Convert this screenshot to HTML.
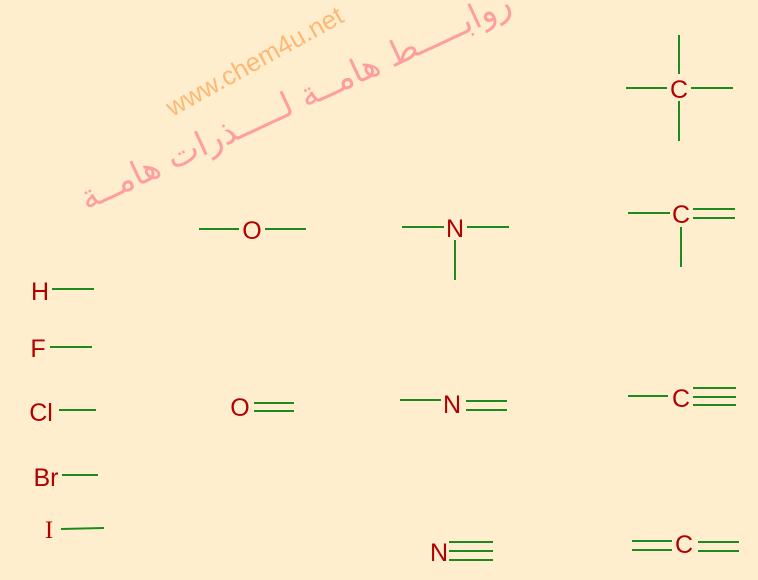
<!DOCTYPE html>
<html><head><meta charset="utf-8"><style>
html,body{margin:0;padding:0;background:#FFEECE;}
svg{display:block}
text{font-family:"Liberation Sans",sans-serif;}
</style></head><body>
<svg width="758" height="580" viewBox="0 0 758 580" xmlns="http://www.w3.org/2000/svg">
<rect width="758" height="580" fill="#FFEECE"/>
<text x="255" y="70" font-size="26" fill="#FFB874" transform="rotate(-29 255 62)" text-anchor="middle">www.chem4u.net</text>
<text x="295" y="112" font-size="34" fill="#FF9E9E" transform="rotate(-25 295 100)" text-anchor="middle" style="font-family:'DejaVu Sans','Noto Sans CJK SC',sans-serif" direction="rtl">روابـــــط هامــة لـــــذرات هامــة</text>
<g stroke="#1E8A1E" stroke-width="2" fill="none">
<line x1="679" y1="35" x2="679" y2="74"/><line x1="679" y1="101" x2="679" y2="141"/>
<line x1="626" y1="88" x2="667" y2="88"/><line x1="691" y1="88" x2="733" y2="88"/>
<line x1="628" y1="213" x2="670" y2="213"/><line x1="693" y1="209" x2="735" y2="209"/><line x1="693" y1="218" x2="735" y2="218"/>
<line x1="681" y1="227" x2="681" y2="267"/>
<line x1="199" y1="229" x2="239" y2="229"/><line x1="265" y1="229" x2="306" y2="229"/>
<line x1="402" y1="227" x2="444" y2="227"/><line x1="467" y1="227" x2="509" y2="227"/><line x1="455" y1="240" x2="455" y2="280"/>
<line x1="52" y1="289" x2="94" y2="289"/>
<line x1="50" y1="347" x2="92" y2="347"/>
<line x1="59" y1="410" x2="96" y2="410"/>
<line x1="62" y1="475" x2="98" y2="475"/>
<line x1="61" y1="529" x2="104" y2="528"/>
<line x1="254" y1="403" x2="294" y2="403"/><line x1="254" y1="411" x2="294" y2="411"/>
<line x1="400" y1="400" x2="441" y2="400"/><line x1="466" y1="401" x2="507" y2="401"/><line x1="466" y1="410" x2="507" y2="410"/>
<line x1="628" y1="396" x2="668" y2="396"/><line x1="693" y1="388" x2="736" y2="388"/><line x1="693" y1="397" x2="736" y2="397"/><line x1="693" y1="405" x2="736" y2="405"/>
<line x1="449" y1="542" x2="493" y2="542"/><line x1="449" y1="551" x2="493" y2="551"/><line x1="449" y1="560" x2="493" y2="560"/>
<line x1="632" y1="541" x2="672" y2="541"/><line x1="632" y1="550" x2="672" y2="550"/><line x1="698" y1="542" x2="739" y2="542"/><line x1="698" y1="551" x2="739" y2="551"/>
</g>
<g fill="#B00000" font-size="25" text-anchor="middle">
<text x="679" y="98">C</text>
<text x="681" y="223">C</text>
<text x="252" y="239">O</text>
<text x="455" y="237">N</text>
<text x="40" y="300">H</text>
<text x="38" y="357">F</text>
<text x="41" y="421">Cl</text>
<text x="46" y="486">Br</text>
<text x="49" y="538" style="font-family:'Liberation Serif',serif">I</text>
<text x="240" y="416">O</text>
<text x="452" y="413">N</text>
<text x="681" y="407">C</text>
<text x="439" y="561">N</text>
<text x="684" y="553">C</text>
</g>
</svg>
</body></html>
